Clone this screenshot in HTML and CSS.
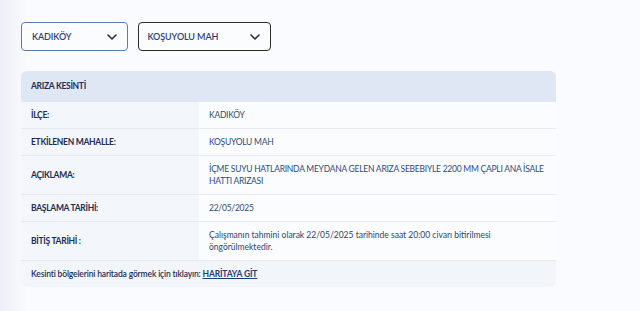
FILE: index.html
```html
<!DOCTYPE html>
<html lang="tr">
<head>
    <meta charset="UTF-8">
    <meta name="viewport" content="width=device-width, initial-scale=1.0">
    <title>Arıza Kesinti</title>
    <link rel="stylesheet" href="styles.css">
</head>
<body>
    <div class="filters">
        <div class="select select-district">
            <span>KADIKÖY</span>
            <svg width="10" height="6" viewBox="0 0 10 6"><path d="M1 1l4 4 4-4" fill="none" stroke="#1c2d55" stroke-width="1.6" stroke-linecap="round" stroke-linejoin="round"/></svg>
        </div>
        <div class="select select-hood active">
            <span>KOŞUYOLU MAH</span>
            <svg width="10" height="6" viewBox="0 0 10 6"><path d="M1 1l4 4 4-4" fill="none" stroke="#1c2d55" stroke-width="1.6" stroke-linecap="round" stroke-linejoin="round"/></svg>
        </div>
    </div>

    <div class="card">
        <div class="card-head">ARIZA KESİNTİ</div>
        <table class="info">
            <tr>
                <th>İLÇE:</th>
                <td>KADIKÖY</td>
            </tr>
            <tr>
                <th>ETKİLENEN MAHALLE:</th>
                <td>KOŞUYOLU MAH</td>
            </tr>
            <tr>
                <th>AÇIKLAMA:</th>
                <td>İÇME SUYU HATLARINDA MEYDANA GELEN ARIZA SEBEBIYLE 2200 MM ÇAPLI ANA İSALE HATTI ARIZASI</td>
            </tr>
            <tr>
                <th>BAŞLAMA TARİHİ:</th>
                <td>22/05/2025</td>
            </tr>
            <tr>
                <th>BİTİŞ TARİHİ :</th>
                <td class="note">Çalışmanın tahmini olarak 22/05/2025 tarihinde saat 20:00 civarı bitirilmesi öngörülmektedir.</td>
            </tr>
        </table>
        <div class="card-foot">
            Kesinti bölgelerini haritada görmek için tıklayın: <a href="#">HARİTAYA GİT</a>
        </div>
    </div>
</body>
</html>
```

FILE: styles.css
```css
body {
    margin: 0;
    padding: 22px 21px;
    font-family: Lato, "Noto Sans", sans-serif;
    font-size: 9px;
    color: #2f4a80;
    background: linear-gradient(to right, #eceff6 0, #f9fbfe 28px);
    min-height: 267px;
}
.filters {
    display: flex;
    gap: 10px;
    margin-bottom: 20px;
}
.select {
    box-sizing: border-box;
    height: 29px;
    display: flex;
    align-items: center;
    justify-content: space-between;
    padding: 0 10px;
    background: #fbfcfe;
    border: 1px solid #5a7cb4;
    border-radius: 4px;
    color: #2a4377;
    font-weight: 600;
    letter-spacing: -0.1px;
}
.select-district {
    width: 107px;
}
.select-hood {
    width: 133px;
}
.select.active {
    border: 1.5px solid #2b2b2b;
    padding: 0 10px 0 8.5px;
}
.card {
    width: 535px;
    border-radius: 6px;
    overflow: hidden;
    background: #f2f5fa;
}
.card-head {
    height: 31px;
    line-height: 31px;
    padding: 0 10px;
    background: #dfe7f5;
    color: #1c2d55;
    font-size: 8.5px;
    font-weight: 700;
    letter-spacing: -0.3px;
}
.info {
    width: 100%;
    border-collapse: collapse;
}
.info th,
.info td {
    padding: 7px 4px 7px 10px;
    line-height: 12px;
    text-align: left;
    vertical-align: middle;
    border-bottom: 1px solid #e6eaf1;
}
.info th {
    width: 164px;
    background: #f3f6fb;
    color: #1c2d55;
    font-size: 8.5px;
    font-weight: 700;
    letter-spacing: -0.3px;
}
.info td {
    background: #fbfcfe;
    color: #2f4a80;
    font-size: 8.5px;
    letter-spacing: -0.25px;
}
.info td.note {
    color: #2d4570;
    letter-spacing: 0;
    padding-right: 9px;
}
.card-foot {
    padding: 7px 10px;
    line-height: 12px;
    color: #1c2d55;
    font-size: 8.5px;
    font-weight: 600;
    letter-spacing: -0.15px;
}
.card-foot a {
    color: #1f3c7a;
    font-weight: 700;
}
```
